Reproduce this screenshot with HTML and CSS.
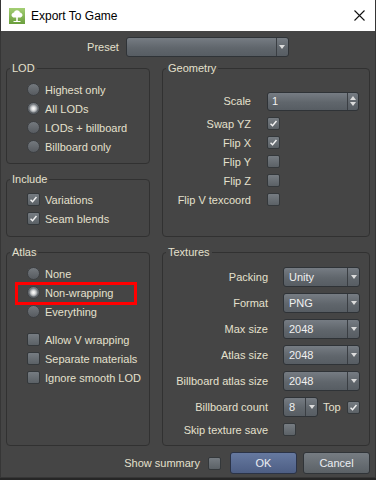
FILE: index.html
```html
<!DOCTYPE html>
<html lang="en">
<head>
  <meta charset="UTF-8">
  <title>Export To Game</title>
  <link rel="stylesheet" href="styles.css">
</head>
<body>

<div class="window">
  <div class="titlebar">
    <svg class="app-icon" width="16" height="16" viewBox="0 0 16 16">
      <defs>
        <linearGradient id="leaf" x1="0" y1="0" x2="0" y2="1">
          <stop offset="0" stop-color="#a4cf74"/>
          <stop offset="1" stop-color="#6a9e3c"/>
        </linearGradient>
      </defs>
      <rect width="16" height="16" fill="url(#leaf)"/>
      <path d="M8 2.3c-1.7 0-2.7 1-2.9 2.1-1.5.2-2.6 1.3-2.6 2.6 0 1.5 1.3 2.6 2.9 2.6h5.2c1.6 0 2.9-1.1 2.9-2.6 0-1.3-1.1-2.4-2.6-2.6C10.7 3.3 9.7 2.3 8 2.3z" fill="#fff"/>
      <path d="M7.2 9h1.6v4.3h-1.6z" fill="#fff"/>
      <path d="M4.5 13.5h7" stroke="#fff" stroke-width="1"/>
    </svg>
    <span class="title">Export To Game</span>
    <svg class="close" width="11" height="11" viewBox="0 0 11 11">
      <path d="M0.5 0.5L10.5 10.5M10.5 0.5L0.5 10.5" stroke="#111" stroke-width="1.1"/>
    </svg>
  </div>

  <div class="dialog">
    <div class="preset-row">
      <span>Preset</span>
      <div class="combo preset"><span class="value"></span><span class="arrow"></span></div>
    </div>

    <div class="groups">
      <fieldset class="group lod">
        <legend>LOD</legend>
        <div class="opts">
          <div class="opt"><span class="radio"></span>Highest only</div>
          <div class="opt"><span class="radio on"></span>All LODs</div>
          <div class="opt"><span class="radio"></span>LODs + billboard</div>
          <div class="opt"><span class="radio"></span>Billboard only</div>
        </div>
      </fieldset>

      <fieldset class="group include">
        <legend>Include</legend>
        <div class="opts">
          <div class="opt"><span class="check"><svg viewBox="0 0 13 13"><path d="M3 6.8L5.4 9.2L10 3.6" /></svg></span>Variations</div>
          <div class="opt"><span class="check"><svg viewBox="0 0 13 13"><path d="M3 6.8L5.4 9.2L10 3.6" /></svg></span>Seam blends</div>
        </div>
      </fieldset>

      <fieldset class="group geometry">
        <legend>Geometry</legend>
        <div class="form">
          <div class="frow scale">
            <span class="lbl">Scale</span>
            <div class="spin"><span class="value">1</span><span class="arrows"></span></div>
          </div>
          <div class="frow"><span class="lbl">Swap YZ</span><span class="check"><svg viewBox="0 0 13 13"><path d="M3 6.8L5.4 9.2L10 3.6" /></svg></span></div>
          <div class="frow"><span class="lbl">Flip X</span><span class="check"><svg viewBox="0 0 13 13"><path d="M3 6.8L5.4 9.2L10 3.6" /></svg></span></div>
          <div class="frow"><span class="lbl">Flip Y</span><span class="check"></span></div>
          <div class="frow"><span class="lbl">Flip Z</span><span class="check"></span></div>
          <div class="frow"><span class="lbl">Flip V texcoord</span><span class="check"></span></div>
        </div>
      </fieldset>

      <fieldset class="group atlas">
        <legend>Atlas</legend>
        <div class="opts">
          <div class="opt"><span class="radio"></span>None</div>
          <div class="opt marked"><span class="radio on"></span>Non-wrapping</div>
          <div class="opt"><span class="radio"></span>Everything</div>
        </div>
        <div class="opts extra">
          <div class="opt"><span class="check"></span>Allow V wrapping</div>
          <div class="opt"><span class="check"></span>Separate materials</div>
          <div class="opt"><span class="check"></span>Ignore smooth LOD</div>
        </div>
      </fieldset>

      <fieldset class="group textures">
        <legend>Textures</legend>
        <div class="form tex">
          <div class="frow"><span class="lbl">Packing</span><div class="combo"><span class="value">Unity</span><span class="arrow"></span></div></div>
          <div class="frow"><span class="lbl">Format</span><div class="combo"><span class="value">PNG</span><span class="arrow"></span></div></div>
          <div class="frow"><span class="lbl">Max size</span><div class="combo"><span class="value">2048</span><span class="arrow"></span></div></div>
          <div class="frow"><span class="lbl">Atlas size</span><div class="combo"><span class="value">2048</span><span class="arrow"></span></div></div>
          <div class="frow"><span class="lbl">Billboard atlas size</span><div class="combo"><span class="value">2048</span><span class="arrow"></span></div></div>
          <div class="frow">
            <span class="lbl">Billboard count</span>
            <div class="combo small"><span class="value">8</span><span class="arrow"></span></div>
            <span class="top-lbl">Top</span>
            <span class="check"><svg viewBox="0 0 13 13"><path d="M3 6.8L5.4 9.2L10 3.6" /></svg></span>
          </div>
          <div class="frow skip"><span class="lbl">Skip texture save</span><span class="check"></span></div>
        </div>
      </fieldset>
    </div>

    <div class="footer">
      <span>Show summary</span>
      <span class="check"></span>
      <button type="button" class="btn ok">OK</button>
      <button type="button" class="btn cancel">Cancel</button>
    </div>
  </div>
</div>

</body>
</html>
```

FILE: styles.css
```css
html, body {
  margin: 0;
  padding: 0;
}
body {
  background: #262626;
  font-family: "Liberation Sans", Arial, sans-serif;
  font-size: 11px;
  color: #e4e0cd;
}
.window {
  width: 376px;
  box-sizing: border-box;
  border: 1px solid #363636;
  border-top: none;
  background: #454545;
}
.titlebar {
  height: 31px;
  background: #fff;
  display: flex;
  align-items: center;
}
.app-icon {
  margin-left: 8px;
}
.title {
  margin-left: 6px;
  font-size: 12px;
  color: #000;
}
.close {
  margin-left: auto;
  margin-right: 10px;
}
.dialog {
  padding: 6px 5px 3px;
}

/* preset */
.preset-row {
  display: flex;
  justify-content: center;
  align-items: center;
  gap: 7px;
  margin-bottom: 5px;
}

/* combos and spin box */
.combo, .spin {
  display: flex;
  height: 20px;
  box-sizing: border-box;
  border: 1px solid #2f3337;
  border-radius: 3px;
  background: linear-gradient(#767c83, #60666c 55%, #575d63);
  color: #f0f0f0;
  flex: none;
}
.combo.preset {
  width: 163px;
}
.combo {
  width: 77px;
}
.combo.small {
  width: 35px;
}
.combo .value, .spin .value {
  flex: 1;
  padding-left: 5px;
  line-height: 18px;
}
.combo .arrow {
  width: 11px;
  border-left: 1px solid #3a3e43;
  display: flex;
  align-items: center;
  justify-content: center;
}
.combo .arrow::after {
  content: "";
  border-left: 3px solid transparent;
  border-right: 3px solid transparent;
  border-top: 4px solid #dcdcdc;
}
.spin {
  width: 92px;
  height: 19px;
}
.spin .value {
  padding-left: 4px;
  line-height: 17px;
}
.spin .arrows {
  width: 10px;
  border-left: 1px solid #3a3e43;
  display: flex;
  flex-direction: column;
  align-items: center;
  justify-content: center;
  gap: 2px;
}
.spin .arrows::before {
  content: "";
  border-left: 3px solid transparent;
  border-right: 3px solid transparent;
  border-bottom: 4px solid #dcdcdc;
}
.spin .arrows::after {
  content: "";
  border-left: 3px solid transparent;
  border-right: 3px solid transparent;
  border-top: 4px solid #dcdcdc;
}

/* groups */
.groups {
  display: grid;
  grid-template-columns: 144px 208px;
  column-gap: 12px;
  row-gap: 9px;
}
.group {
  margin: 0;
  padding: 0;
  min-width: 0;
  border: 1px solid #313131;
  border-radius: 4px;
}
.group legend {
  margin-left: 3px;
  padding: 0 2px;
  line-height: 13px;
}
.lod {
  grid-column: 1;
  grid-row: 1;
}
.include {
  grid-column: 1;
  grid-row: 2;
}
.geometry {
  grid-column: 2;
  grid-row: 1 / 3;
}
.atlas {
  grid-column: 1;
  grid-row: 3;
}
.textures {
  grid-column: 2;
  grid-row: 3;
}

.opts {
  padding: 5px 0 7px 20px;
}
.include .opts {
  padding: 4px 0 8px 20px;
}
.atlas .opts {
  padding-bottom: 0;
}
.atlas .opts.extra {
  padding-top: 9px;
}
.opt {
  height: 19px;
  display: flex;
  align-items: center;
}
.opt.marked {
  position: relative;
}
.opt.marked::after {
  content: "";
  position: absolute;
  left: -12px;
  top: -1px;
  width: 122px;
  height: 23px;
  box-sizing: border-box;
  border: 3px solid #ff0000;
}

/* radio and check */
.radio, .check {
  width: 13px;
  height: 13px;
  box-sizing: border-box;
  flex: none;
}
.opt .radio, .opt .check {
  margin-right: 5px;
}
.radio {
  border-radius: 50%;
  border: 1px solid #3d4043;
  background: linear-gradient(#74797e, #575b60);
}
.radio.on {
  background: radial-gradient(circle, #fbfbfb 0, #e6e6e6 1.6px, #a8acb0 3.2px, rgba(120,124,128,0) 4.5px),
              linear-gradient(#74797e, #575b60);
}
.check {
  border-radius: 2px;
  border: 1px solid #34383b;
  background: linear-gradient(#767c82, #5b6166);
}
.check svg {
  display: block;
  width: 11px;
  height: 11px;
}
.check svg path {
  fill: none;
  stroke: #f2f2f2;
  stroke-width: 1.7;
}

/* label / control rows */
.form {
  padding: 16px 10px 0 0;
}
.frow {
  display: flex;
  align-items: center;
  height: 19px;
}
.frow .lbl {
  width: 88px;
  margin-right: 16px;
  text-align: right;
  flex: none;
  white-space: nowrap;
}
.frow.scale {
  height: 20px;
  margin-bottom: 3px;
}
.form.tex {
  display: flex;
  flex-direction: column;
  gap: 6px;
  padding: 8px 0 9px 0;
}
.tex .frow {
  height: 20px;
}
.tex .frow .lbl {
  width: 105px;
  margin-right: 15px;
}
.tex .frow.skip {
  height: 13px;
}
.top-lbl {
  margin-left: 5px;
  margin-right: 6px;
}

/* footer */
.footer {
  display: flex;
  justify-content: flex-end;
  align-items: center;
  margin-top: 6px;
}
.footer .check {
  margin-left: 8px;
  margin-right: 9px;
}
.btn {
  width: 67px;
  height: 22px;
  margin: 0;
  padding: 0;
  border-radius: 3px;
  font-family: "Liberation Sans", Arial, sans-serif;
  font-size: 11px;
  color: #eceef2;
}
.btn.ok {
  border: 1px solid #2b3346;
  background: linear-gradient(#6679a0, #4d5e84);
}
.btn.cancel {
  margin-left: 6px;
  border: 1px solid #303438;
  background: linear-gradient(#767c82, #5b6166);
}
```
